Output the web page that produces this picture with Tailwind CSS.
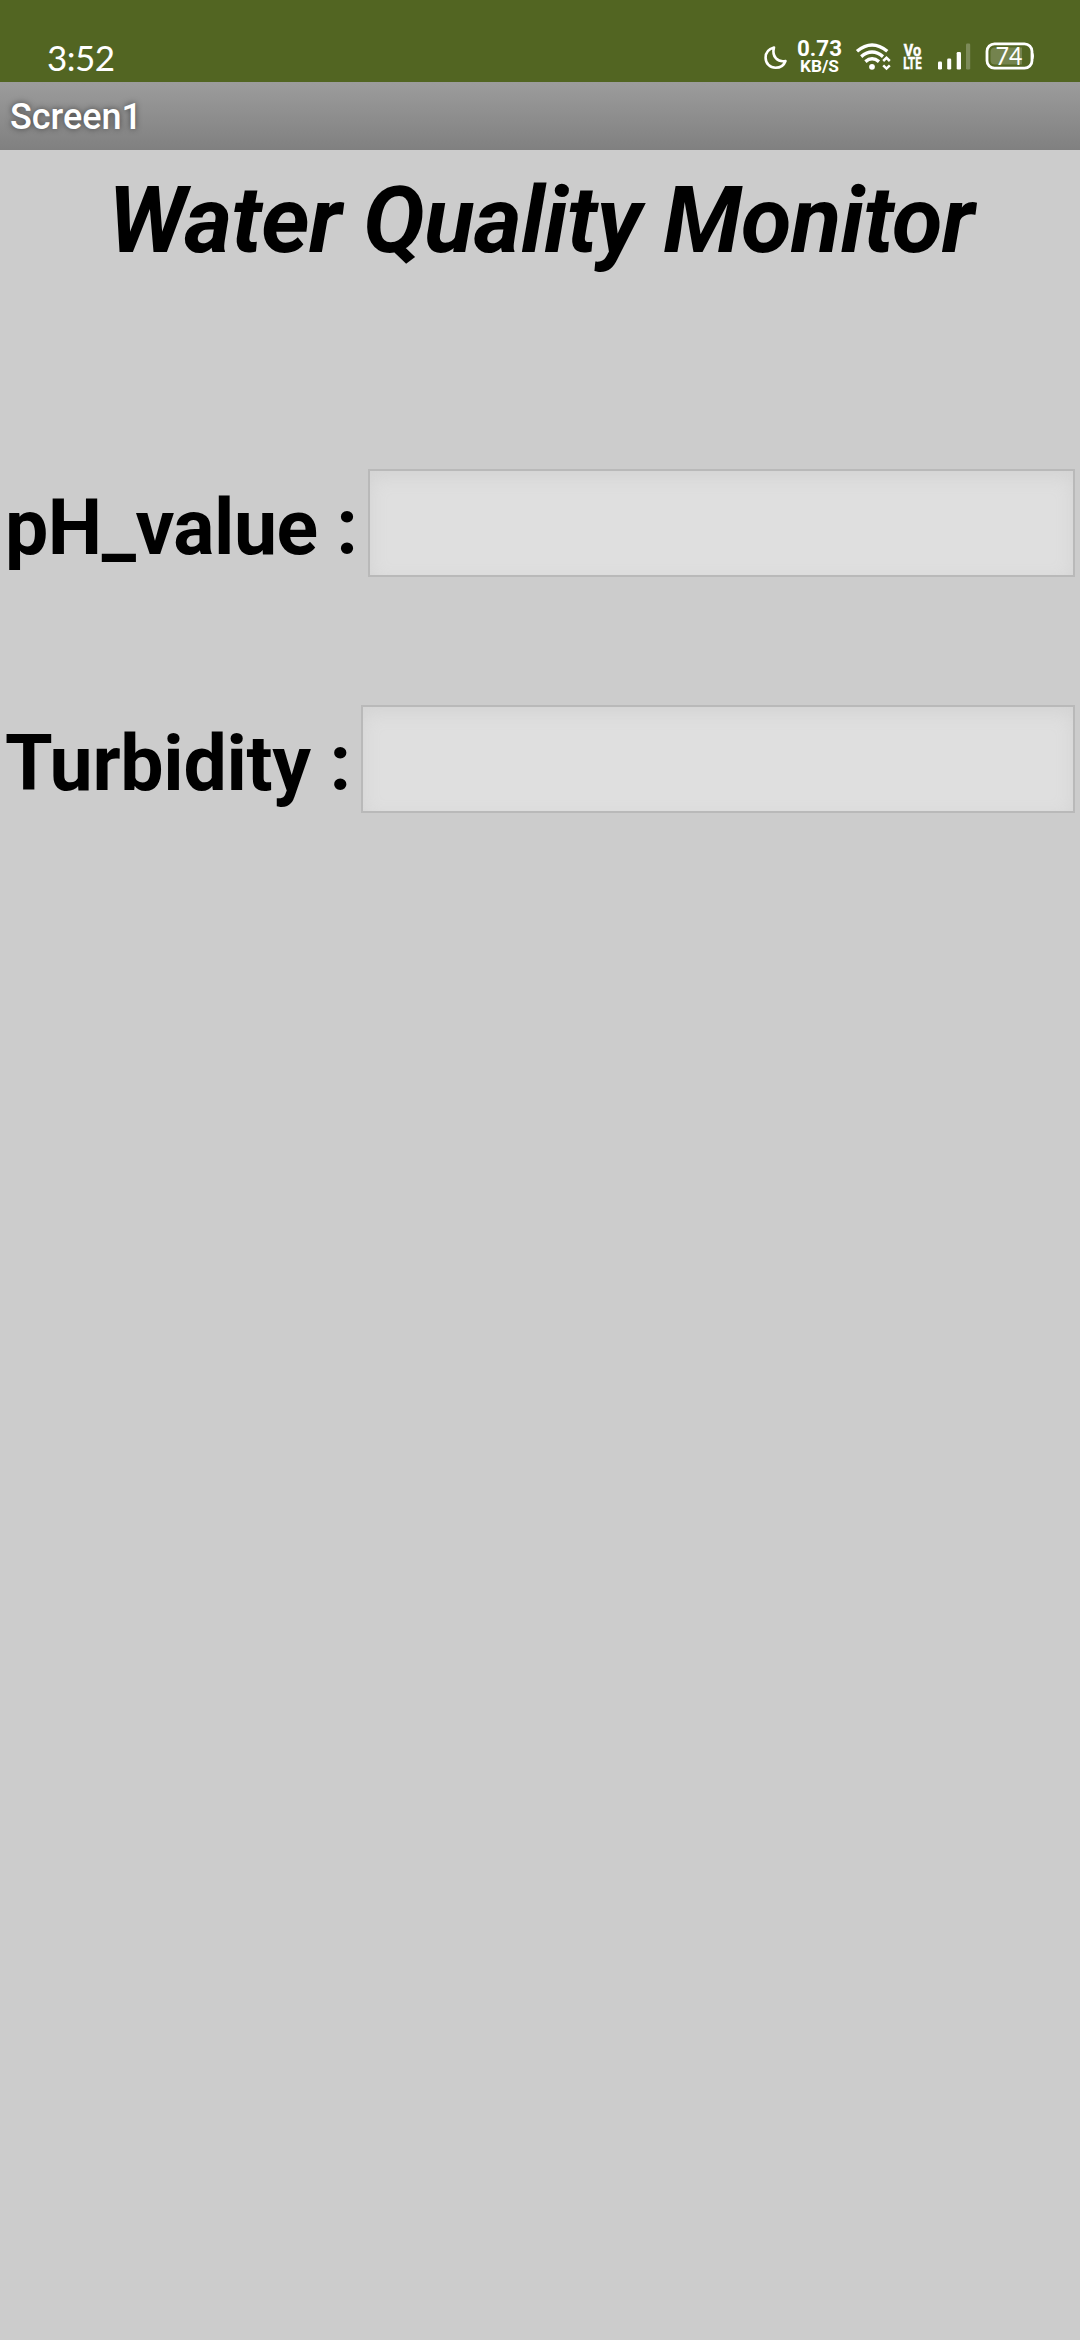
<!DOCTYPE html>
<html lang="en">
<head>
<meta charset="utf-8">
<title>Screen1</title>
<script src="https://cdn.jsdelivr.net/npm/@tailwindcss/browser@4"></script>
</head>
<body class="w-[1080px] h-[2340px] overflow-hidden bg-[#cccccc] font-[Roboto,sans-serif] text-black">
  <!-- Status bar -->
  <header class="flex h-[82px] justify-between bg-[#526522] pl-[48px] pr-[46px]">
    <svg class="h-[82px] w-[70px] overflow-visible" viewBox="0 0 70 82" fill="#fff">
      <text x="-1" y="71" font-family="Lato, sans-serif" font-size="35" textLength="68" lengthAdjust="spacing">3:52</text>
    </svg>
    <div class="flex">
      <!-- Do not disturb -->
      <svg class="mr-[9px] h-[82px] w-[24px]" viewBox="764 0 24 82" fill="none" stroke="#fff" stroke-width="2.6" stroke-linejoin="round">
        <path d="M774 47.5C768.5 49 765.6 53 765.6 57.7C765.6 63.5 770 67.8 775.5 67.8C780.5 67.8 784 65.2 785.5 61C778 62.5 771.5 57 774 47.5Z"/>
      </svg>
      <!-- Network speed -->
      <svg class="mr-[11px] h-[82px] w-[46px] overflow-visible" viewBox="797 0 46 82" fill="#fff" font-family="Roboto, sans-serif" font-weight="700">
        <text x="797" y="56" font-size="22.5" textLength="45" lengthAdjust="spacingAndGlyphs">0.73</text>
        <text x="800" y="72" font-size="16.5" textLength="39" lengthAdjust="spacingAndGlyphs">KB/S</text>
      </svg>
      <!-- Wi-Fi -->
      <svg class="mr-[11px] h-[82px] w-[38px]" viewBox="854 0 38 82" fill="none" stroke="#fff" stroke-width="3.4">
        <path d="M857 51.2Q872 38.6 887.3 51.2M861.2 56.6Q872 47.6 883 56.6M865.4 61.6Q872 56 879 61.6"/>
        <circle cx="872" cy="66.8" r="2.9" fill="#fff" stroke="none"/>
        <path d="M883.2 61L886.5 57.8L889.8 61M883.2 65.4L886.5 68.6L889.8 65.4" stroke-width="2.5"/>
      </svg>
      <!-- VoLTE -->
      <svg class="mr-[13px] h-[82px] w-[21px] overflow-visible" viewBox="903 0 21 82" fill="#fff" stroke="#fff" stroke-width=".5" font-family="Roboto, sans-serif" font-weight="700">
        <g transform="translate(903.8 0) scale(.86 1)">
          <text x="0" y="56.5" font-size="16.8">Vo</text>
        </g>
        <g transform="translate(903.2 0) scale(.68 1)">
          <text x="0" y="69.5" font-size="16.8">LTE</text>
        </g>
      </svg>
      <!-- Signal -->
      <svg class="mr-[14px] h-[82px] w-[34px]" viewBox="937 0 34 82" fill="#fff">
        <rect x="938" y="61.5" width="4" height="8" rx="1.2"/>
        <rect x="947.2" y="58.5" width="4" height="11" rx="1.2"/>
        <rect x="956.7" y="52" width="4.3" height="17.5" rx="1.2"/>
        <rect x="966" y="43.5" width="4.2" height="26" rx="1.2" fill-opacity=".25"/>
      </svg>
      <!-- Battery -->
      <svg class="h-[82px] w-[49px] overflow-visible" viewBox="985 0 49 82">
        <rect x="987" y="43.8" width="45" height="24.4" rx="7.5" fill="none" stroke="#fff" stroke-width="2.8"/>
        <path d="M995 47.5H1022V64.5H995Q990.5 64.5 990.5 60V52Q990.5 47.5 995 47.5Z" fill="#fff" fill-opacity=".2"/>
        <path d="M1032 52Q1034 53 1034 56T1032 60Z" fill="#fff"/>
        <text x="995.5" y="64.5" fill="#fff" font-family="Lato, sans-serif" font-size="24.5" textLength="27" lengthAdjust="spacingAndGlyphs">74</text>
      </svg>
    </div>
  </header>

  <!-- Title bar -->
  <div class="h-[68px] bg-linear-to-b from-[#9c9c9c] to-[#808080] pt-[1px] pl-[10px] text-[36px] leading-[68px] font-medium text-white [text-shadow:0_0_6px_rgb(0_0_0/0.55)]">Screen1</div>

  <main class="pt-[21px]">
    <h1 class="pl-[2px] text-center text-[92.4px] leading-[100px] font-bold tracking-[-0.68px] italic whitespace-nowrap">Water Quality Monitor</h1>
    <div class="mt-[198px] flex h-[108px] pr-[5px] pl-[5px]">
      <label for="ph" class="w-[363px] shrink-0 pt-[19px] text-[77px] leading-[80px] font-bold tracking-[-0.5px] whitespace-nowrap">pH_value :</label>
      <input id="ph" class="h-[108px] min-w-0 flex-1 border-2 border-[#b9b9b9] bg-[#dfdfdf] shadow-[inset_0_6px_18px_#d3d3d3]">
    </div>
    <div class="mt-[128px] flex h-[108px] pr-[5px] pl-[5px]">
      <label for="turbidity" class="w-[356px] shrink-0 pt-[19px] text-[77px] leading-[80px] font-bold tracking-[-0.3px] whitespace-nowrap">Turbidity :</label>
      <input id="turbidity" class="h-[108px] min-w-0 flex-1 border-2 border-[#b9b9b9] bg-[#dfdfdf] shadow-[inset_0_6px_18px_#d3d3d3]">
    </div>
  </main>
</body>
</html>
